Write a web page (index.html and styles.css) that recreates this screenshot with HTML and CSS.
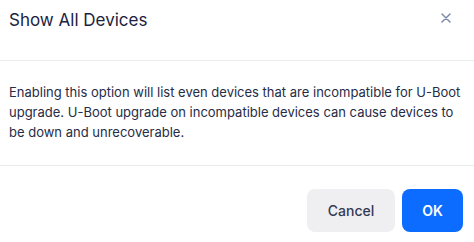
FILE: index.html
```html
<!DOCTYPE html>
<html>
<head>
<meta charset="utf-8">
<link rel="stylesheet" href="styles.css">
</head>
<body>
<div class="modal">
  <div class="modal-header">
    <h2 class="title">Show All Devices</h2>
    <button class="close" aria-label="Close">
      <svg width="10" height="10" viewBox="0 0 10 10"><path d="M1 1L9 9M9 1L1 9" stroke="#7f89aa" stroke-width="1.5" stroke-linecap="round"/></svg>
    </button>
  </div>
  <div class="modal-body">
    <p>Enabling this option will list even devices that are incompatible for U-Boot upgrade. U-Boot upgrade on incompatible devices can cause devices to be down and unrecoverable.</p>
  </div>
  <div class="modal-footer">
    <button class="btn btn-secondary">Cancel</button>
    <button class="btn btn-primary">OK</button>
  </div>
</div>
</body>
</html>
```
FILE: styles.css
```css
* { box-sizing: border-box; }
html, body { margin: 0; padding: 0; background: #fff; }
body { font-family: Inter, "Noto Sans", sans-serif; color: #1f2640; }
.modal { width: 474px; height: 242px; display: flex; flex-direction: column; }
.modal-header {
  height: 61px;
  border-bottom: 1px solid #ebecef;
  display: flex;
  align-items: flex-start;
  justify-content: space-between;
  padding: 9px 18px 0 9px;
}
.title { margin: 0; font-size: 17px; font-weight: 400; line-height: 22px; color: #1c2340; }
.close {
  border: 0; background: none; padding: 0; margin-top: 3px; margin-right: 4px;
  width: 12px; height: 12px; display: flex; align-items: center; justify-content: center;
}
.modal-body { padding: 21px 9px 0 9px; height: 105px; border-bottom: 1px solid #ebecef; }
.modal-body p { margin: 0; font-size: 13px; line-height: 20px; color: #262c45; }
.modal-footer {
  display: flex; justify-content: flex-end; gap: 7px;
  padding: 23px 11px 0 0;
}
.btn {
  height: 43px; border: 0; border-radius: 8px;
  font-family: Inter, "Noto Sans", sans-serif; font-size: 14px;
}
.btn-secondary { width: 88px; background: #efeff2; color: #343a52; font-weight: 500; }
.btn-primary { width: 61px; background: #0b6cff; color: #fff; font-weight: 600; }
```
